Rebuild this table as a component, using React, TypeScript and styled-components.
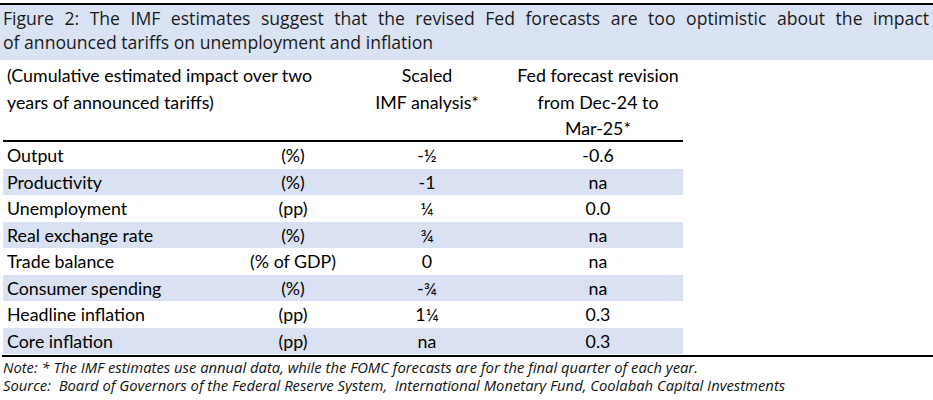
import React from "react";
import styled, { createGlobalStyle } from "styled-components";

const Global = createGlobalStyle`
  html, body { margin: 0; padding: 0; background: #ffffff; }
  body { font-family: "Open Sans", "Noto Sans", sans-serif; color: #111; }
`;

const Page = styled.div`
  width: 933px;
  padding-top: 3px;
`;

const Title = styled.h2`
  margin: 0;
  border-top: 2px solid #000;
  background: #dae3f3;
  padding: 1px 4px 6px 3px;
  font-family: "Open Sans", "Noto Sans", sans-serif;
  font-weight: 400;
  font-size: 17.6px;
  line-height: 24px;
  text-align: justify;
  color: #1a1a1a;
`;

const Table = styled.div`
  display: grid;
  grid-template-columns: 242px 96px 172px 170px;
  margin-left: 3px;
  width: 680px;
  font-family: "Lato", "Open Sans", sans-serif;
  font-size: 17.8px;
  color: #000;
`;

const Head = styled.div<{ $span?: number; $align?: string }>`
  grid-column: span ${(p) => p.$span ?? 1};
  text-align: ${(p) => p.$align ?? "center"};
  padding: 2px 0 0 ${(p) => (p.$align === "left" ? "4px" : "0")};
  line-height: 26.5px;
  height: 78px;
  border-bottom: 2px solid #000;
  white-space: nowrap;
`;

const Cell = styled.div<{ $shade: boolean; $align?: string }>`
  background: ${(p) => (p.$shade ? "#d9e1f2" : "transparent")};
  text-align: ${(p) => p.$align ?? "center"};
  padding-left: ${(p) => (p.$align === "left" ? "4px" : "0")};
  height: 26.5px;
  line-height: 26.5px;
  white-space: nowrap;
`;

const Rule = styled.div`
  margin: 1px 0 0 2px;
  border-top: 2.5px solid #000;
`;

const Notes = styled.div`
  padding: 1px 0 0 3px;
  font-family: "Open Sans", "Noto Sans", sans-serif;
  font-style: italic;
  font-size: 14.8px;
  line-height: 18px;
  color: #111;
  white-space: nowrap;
`;

const NoteLine = styled.div`
  height: 18px;
`;

const rows: [string, string, string, string][] = [
  ["Output", "(%)", "-½", "-0.6"],
  ["Productivity", "(%)", "-1", "na"],
  ["Unemployment", "(pp)", "¼", "0.0"],
  ["Real exchange rate", "(%)", "¾", "na"],
  ["Trade balance", "(% of GDP)", "0", "na"],
  ["Consumer spending", "(%)", "-¾", "na"],
  ["Headline inflation", "(pp)", "1¼", "0.3"],
  ["Core inflation", "(pp)", "na", "0.3"],
];

export default function App() {
  return (
    <Page>
      <Global />
      <Title>
        {"Figure 2: The IMF estimates suggest that the revised Fed forecasts are too optimistic about the impact of\u00A0announced tariffs on unemployment and inflation"}
      </Title>
      <Table>
        <Head $span={2} $align="left">
          (Cumulative estimated impact over two
          <br />
          years of announced tariffs)
        </Head>
        <Head>
          Scaled
          <br />
          IMF analysis*
        </Head>
        <Head>
          Fed forecast revision
          <br />
          from Dec-24 to
          <br />
          Mar-25*
        </Head>
        {rows.map((r, i) => (
          <React.Fragment key={r[0]}>
            <Cell $shade={i % 2 === 1} $align="left">{r[0]}</Cell>
            <Cell $shade={i % 2 === 1}>{r[1]}</Cell>
            <Cell $shade={i % 2 === 1}>{r[2]}</Cell>
            <Cell $shade={i % 2 === 1}>{r[3]}</Cell>
          </React.Fragment>
        ))}
      </Table>
      <Rule />
      <Notes>
        <NoteLine>
          Note: * The IMF estimates use annual data, while the FOMC forecasts are for the final quarter of each year.
        </NoteLine>
        <NoteLine>
          Source:&nbsp; Board of Governors of the Federal Reserve System,&nbsp; International Monetary Fund, Coolabah Capital Investments
        </NoteLine>
      </Notes>
    </Page>
  );
}
